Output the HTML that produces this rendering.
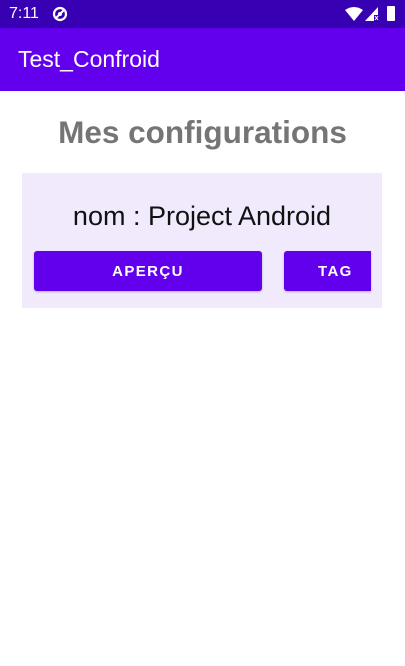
<!DOCTYPE html>
<html><head><style>
body{margin:0;width:405px;height:666px;background:#fff;font-family:"Liberation Sans",sans-serif;position:relative;overflow:hidden}
.sb{position:absolute;left:0;top:0;width:405px;height:28px;background:#3700B3;color:#fff}
.tb{position:absolute;left:0;top:28px;width:405px;height:63px;background:#6200EE;color:#fff}
.abs{position:absolute}
.btn{position:absolute;background:#6200EE;color:#fff;border-radius:3px;font-size:15px;font-weight:bold;letter-spacing:1.4px;display:flex;align-items:center;justify-content:center;box-shadow:0 1px 2px rgba(0,0,0,.25)}
</style></head><body>
<div class="sb">
 <div class="abs" style="left:9px;top:5px;font-size:16px">7:11</div>
 <svg class="abs" style="left:52px;top:6px" width="16" height="16" viewBox="0 0 16 16"><circle cx="8" cy="8" r="6" fill="none" stroke="#fff" stroke-width="2.2"/><path d="M4 12L12 4" stroke="#fff" stroke-width="2"/><circle cx="8" cy="8" r="2" fill="#fff"/></svg>
 <svg class="abs" style="left:345px;top:7px" width="18" height="14" viewBox="0 0 18 14"><path d="M0 3Q9 -3 18 3L9 14Z" fill="#fff"/></svg>
 <svg class="abs" style="left:365px;top:7px" width="14" height="14" viewBox="0 0 14 14"><path d="M13 0L13 8L9 8L9 14L0 14Z" fill="#fff"/><path d="M10 9L13 13M13 9L10 13" stroke="#fff" stroke-width="1"/></svg>
 <div class="abs" style="left:387px;top:6px;width:8px;height:15px;background:#fff;border-radius:1px"></div>
</div>
<div class="tb"><div class="abs" style="left:18px;top:18px;font-size:23px;font-weight:500">Test_Confroid</div></div>
<div class="abs" style="left:0;width:405px;top:114px;text-align:center;font-size:31.5px;font-weight:bold;color:#757575">Mes configurations</div>
<div class="abs" style="left:22px;top:173px;width:360px;height:135px;background:#F1EAFD"></div>
<div class="abs" style="left:22px;width:360px;top:201px;text-align:center;font-size:27px;color:#111">nom : Project Android</div>
<div class="btn" style="left:34px;top:251px;width:228px;height:40px">APERÇU</div>
<div class="btn" style="left:284px;top:251px;width:87px;height:40px;border-radius:3px 0 0 3px;justify-content:flex-start;padding-left:34px;box-sizing:border-box">TAG</div>
</body></html>
